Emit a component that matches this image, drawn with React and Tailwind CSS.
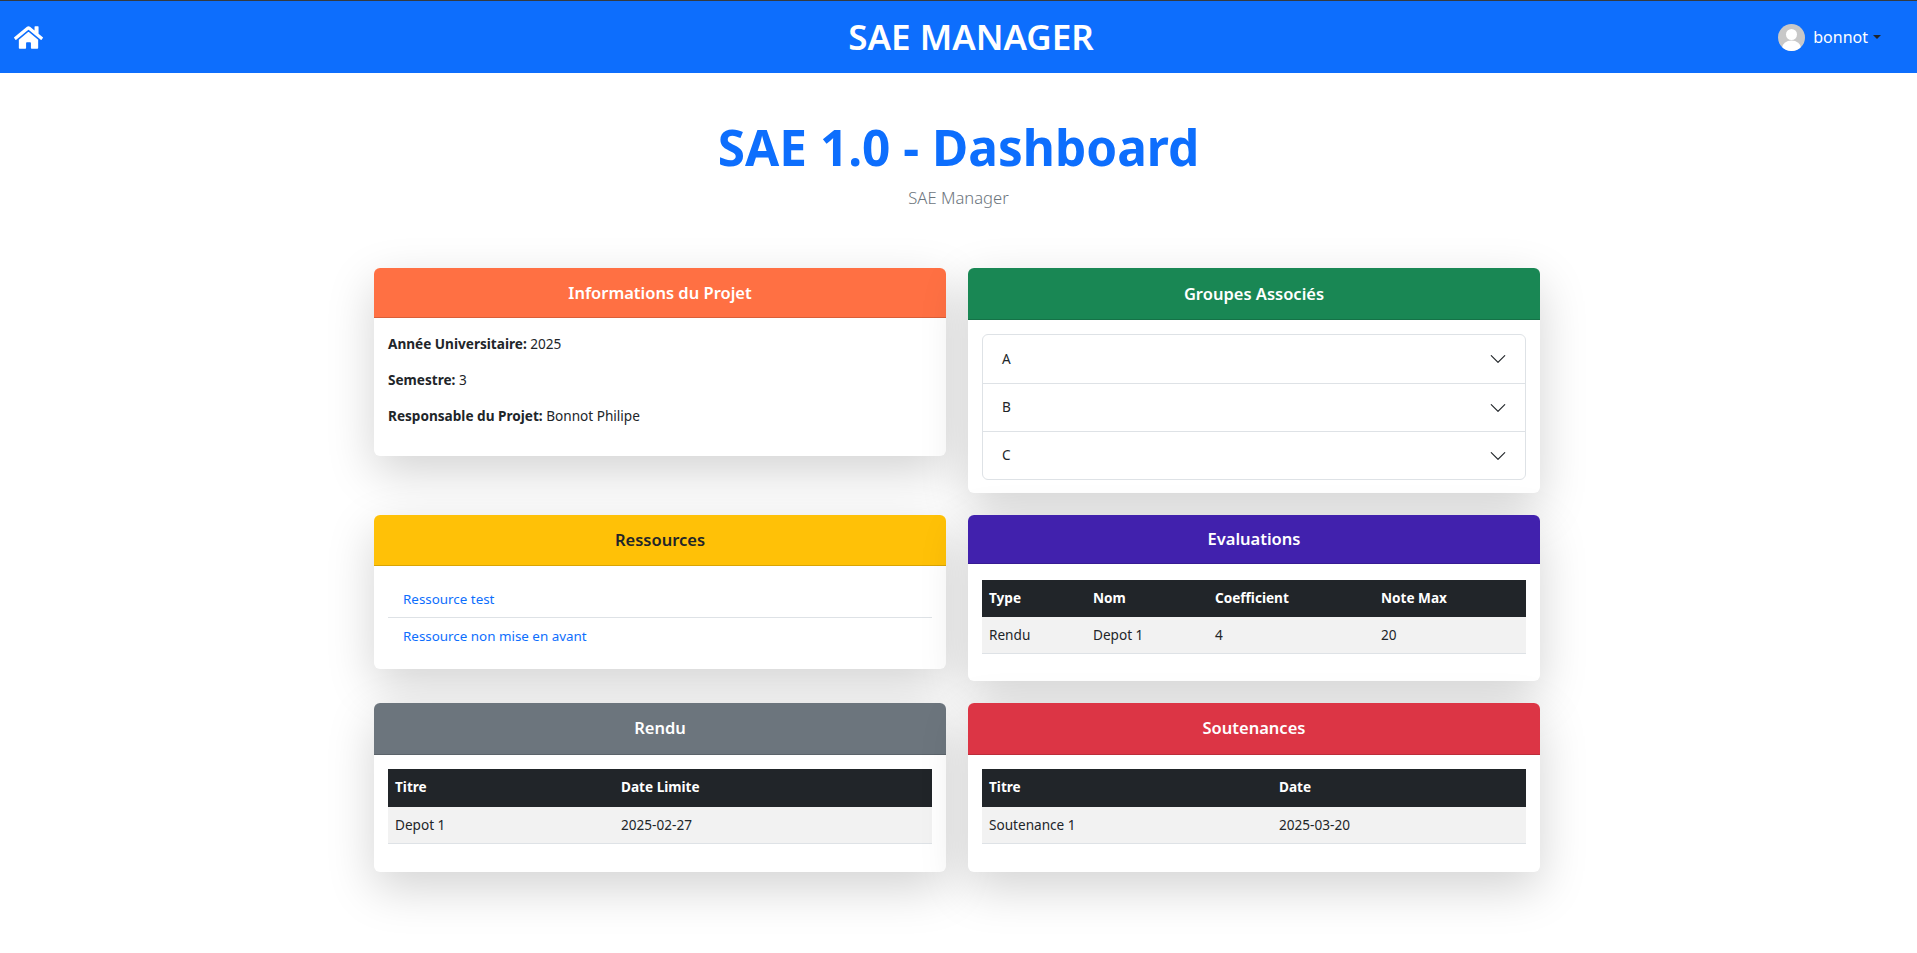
import { FaHome } from "react-icons/fa";

const evaluations = [{ type: "Rendu", nom: "Depot 1", coef: "4", max: "20" }];

function Card({ title, color, headerClass, children }) {
  return (
    <div className="bg-white rounded-md shadow-[0_16px_48px_rgba(0,0,0,0.175)]">
      <div className={`rounded-t-md text-center text-[16.5px] font-semibold leading-[24px] border-b border-black/15 ${color} ${headerClass}`}>
        {title}
      </div>
      {children}
    </div>
  );
}

function Chevron() {
  return (
    <svg width="18" height="18" viewBox="0 0 16 16" fill="#212529">
      <path fillRule="evenodd" d="M1.646 4.646a.5.5 0 0 1 .708 0L8 10.293l5.646-5.647a.5.5 0 0 1 .708.708l-6 6a.5.5 0 0 1-.708 0l-6-6a.5.5 0 0 1 0-.708z" />
    </svg>
  );
}

export default function App() {
  return (
    <div className="min-h-[953px] bg-white text-[#212529] font-['Noto_Sans',sans-serif] text-[13.6px]">
      <nav className="h-[73px] bg-[#0d6efd] border-t border-[#343a40] flex items-center pl-[14px] pr-[36px]">
        <div className="flex-1">
          <FaHome className="text-white text-[29px]" />
        </div>
        <span className="ml-[47px] text-white text-[35px] font-semibold">SAE MANAGER</span>
        <div className="flex-1 flex items-center justify-end">
          <div className="w-[27px] h-[27px] rounded-full bg-[#c8c8c8] overflow-hidden flex items-center justify-center">
            <svg width="27" height="27" viewBox="0 0 27 27" fill="white">
              <circle cx="13.5" cy="10.5" r="5.5" />
              <ellipse cx="13.5" cy="24" rx="9.5" ry="7.5" />
            </svg>
          </div>
          <span className="ml-[8px] text-white text-[16px]">bonnot</span>
          <span className="ml-[5px] border-t-[4px] border-x-[4px] border-x-transparent border-t-[#212529]" />
        </div>
      </nav>

      <header className="text-center pt-[45px]">
        <h1 className="text-[49.5px] font-bold leading-[58px] text-[#0d6efd]">SAE 1.0 - Dashboard</h1>
        <p className="mt-[10px] text-[16.6px] font-light leading-[24px] text-[#6c757d]">SAE Manager</p>
      </header>

      <main className="w-[1166px] ml-[374px] mt-[58px] grid grid-cols-2 gap-x-[22px] gap-y-[22px] items-start">
        <Card title="Informations du Projet" color="bg-[#ff7043] text-white" headerClass="pt-[13px] pb-[12px]">
          <div className="px-[14px] pt-[16px] pb-[30px] leading-[20px] flex flex-col gap-[16px]">
            <p><b>Année Universitaire:</b> 2025</p>
            <p><b>Semestre:</b> 3</p>
            <p><b>Responsable du Projet:</b> Bonnot Philipe</p>
          </div>
        </Card>

        <Card title="Groupes Associés" color="bg-[#198754] text-white" headerClass="pt-[14px] pb-[13px]">
          <div className="px-[14px] pt-[14px] pb-[13px]">
            <div className="border border-[#dee2e6] rounded-md">
              {["A", "B", "C"].map((g, i) => (
                <div key={g} className={`flex items-center justify-between h-[48px] pl-[19px] pr-[18px] ${i > 0 ? "border-t border-[#dee2e6]" : ""}`}>
                  <span>{g}</span>
                  <Chevron />
                </div>
              ))}
            </div>
          </div>
        </Card>

        <Card title="Ressources" color="bg-[#ffc107] text-[#212529]" headerClass="py-[13px]">
          <div className="px-[14px] pt-[15px] pb-[14px]">
            <a className="block px-[15px] h-[37px] leading-[36px] text-[13.4px] text-[#0d6efd] border-b border-[#dee2e6]">Ressource test</a>
            <a className="block px-[15px] h-[37px] leading-[37px] text-[13.4px] text-[#0d6efd]">Ressource non mise en avant</a>
          </div>
        </Card>

        <Card title="Evaluations" color="bg-[#4121ad] text-white" headerClass="py-[12px]">
          <div className="px-[14px] pt-[16px] pb-[27px]">
            <table className="w-full table-fixed text-left">
              <thead className="bg-[#212529] text-white">
                <tr className="h-[37px]">
                  <th className="w-[104px] px-[7px] font-bold">Type</th>
                  <th className="w-[122px] px-[7px] font-bold">Nom</th>
                  <th className="w-[166px] px-[7px] font-bold">Coefficient</th>
                  <th className="px-[7px] font-bold">Note Max</th>
                </tr>
              </thead>
              <tbody className="bg-[#f2f2f2]">
                {evaluations.map((e) => (
                  <tr key={e.type} className="h-[36px] border-b border-[#dee2e6]">
                    <td className="px-[7px]">{e.type}</td>
                    <td className="px-[7px]">{e.nom}</td>
                    <td className="px-[7px]">{e.coef}</td>
                    <td className="px-[7px]">{e.max}</td>
                  </tr>
                ))}
              </tbody>
            </table>
          </div>
        </Card>

        <Card title="Rendu" color="bg-[#6c757d] text-white" headerClass="pt-[13px] pb-[14px]">
          <div className="px-[14px] pt-[14px] pb-[28px]">
            <table className="w-full table-fixed text-left">
              <thead className="bg-[#212529] text-white">
                <tr className="h-[38px]">
                  <th className="w-[226px] px-[7px] font-bold">Titre</th>
                  <th className="px-[7px] font-bold">Date Limite</th>
                </tr>
              </thead>
              <tbody className="bg-[#f2f2f2]">
                <tr className="h-[37px] border-b border-[#dee2e6]">
                  <td className="px-[7px]">Depot 1</td>
                  <td className="px-[7px]">2025-02-27</td>
                </tr>
              </tbody>
            </table>
          </div>
        </Card>

        <Card title="Soutenances" color="bg-[#dc3545] text-white" headerClass="pt-[13px] pb-[14px]">
          <div className="px-[14px] pt-[14px] pb-[28px]">
            <table className="w-full table-fixed text-left">
              <thead className="bg-[#212529] text-white">
                <tr className="h-[38px]">
                  <th className="w-[290px] px-[7px] font-bold">Titre</th>
                  <th className="px-[7px] font-bold">Date</th>
                </tr>
              </thead>
              <tbody className="bg-[#f2f2f2]">
                <tr className="h-[37px] border-b border-[#dee2e6]">
                  <td className="px-[7px]">Soutenance 1</td>
                  <td className="px-[7px]">2025-03-20</td>
                </tr>
              </tbody>
            </table>
          </div>
        </Card>
      </main>
    </div>
  );
}
